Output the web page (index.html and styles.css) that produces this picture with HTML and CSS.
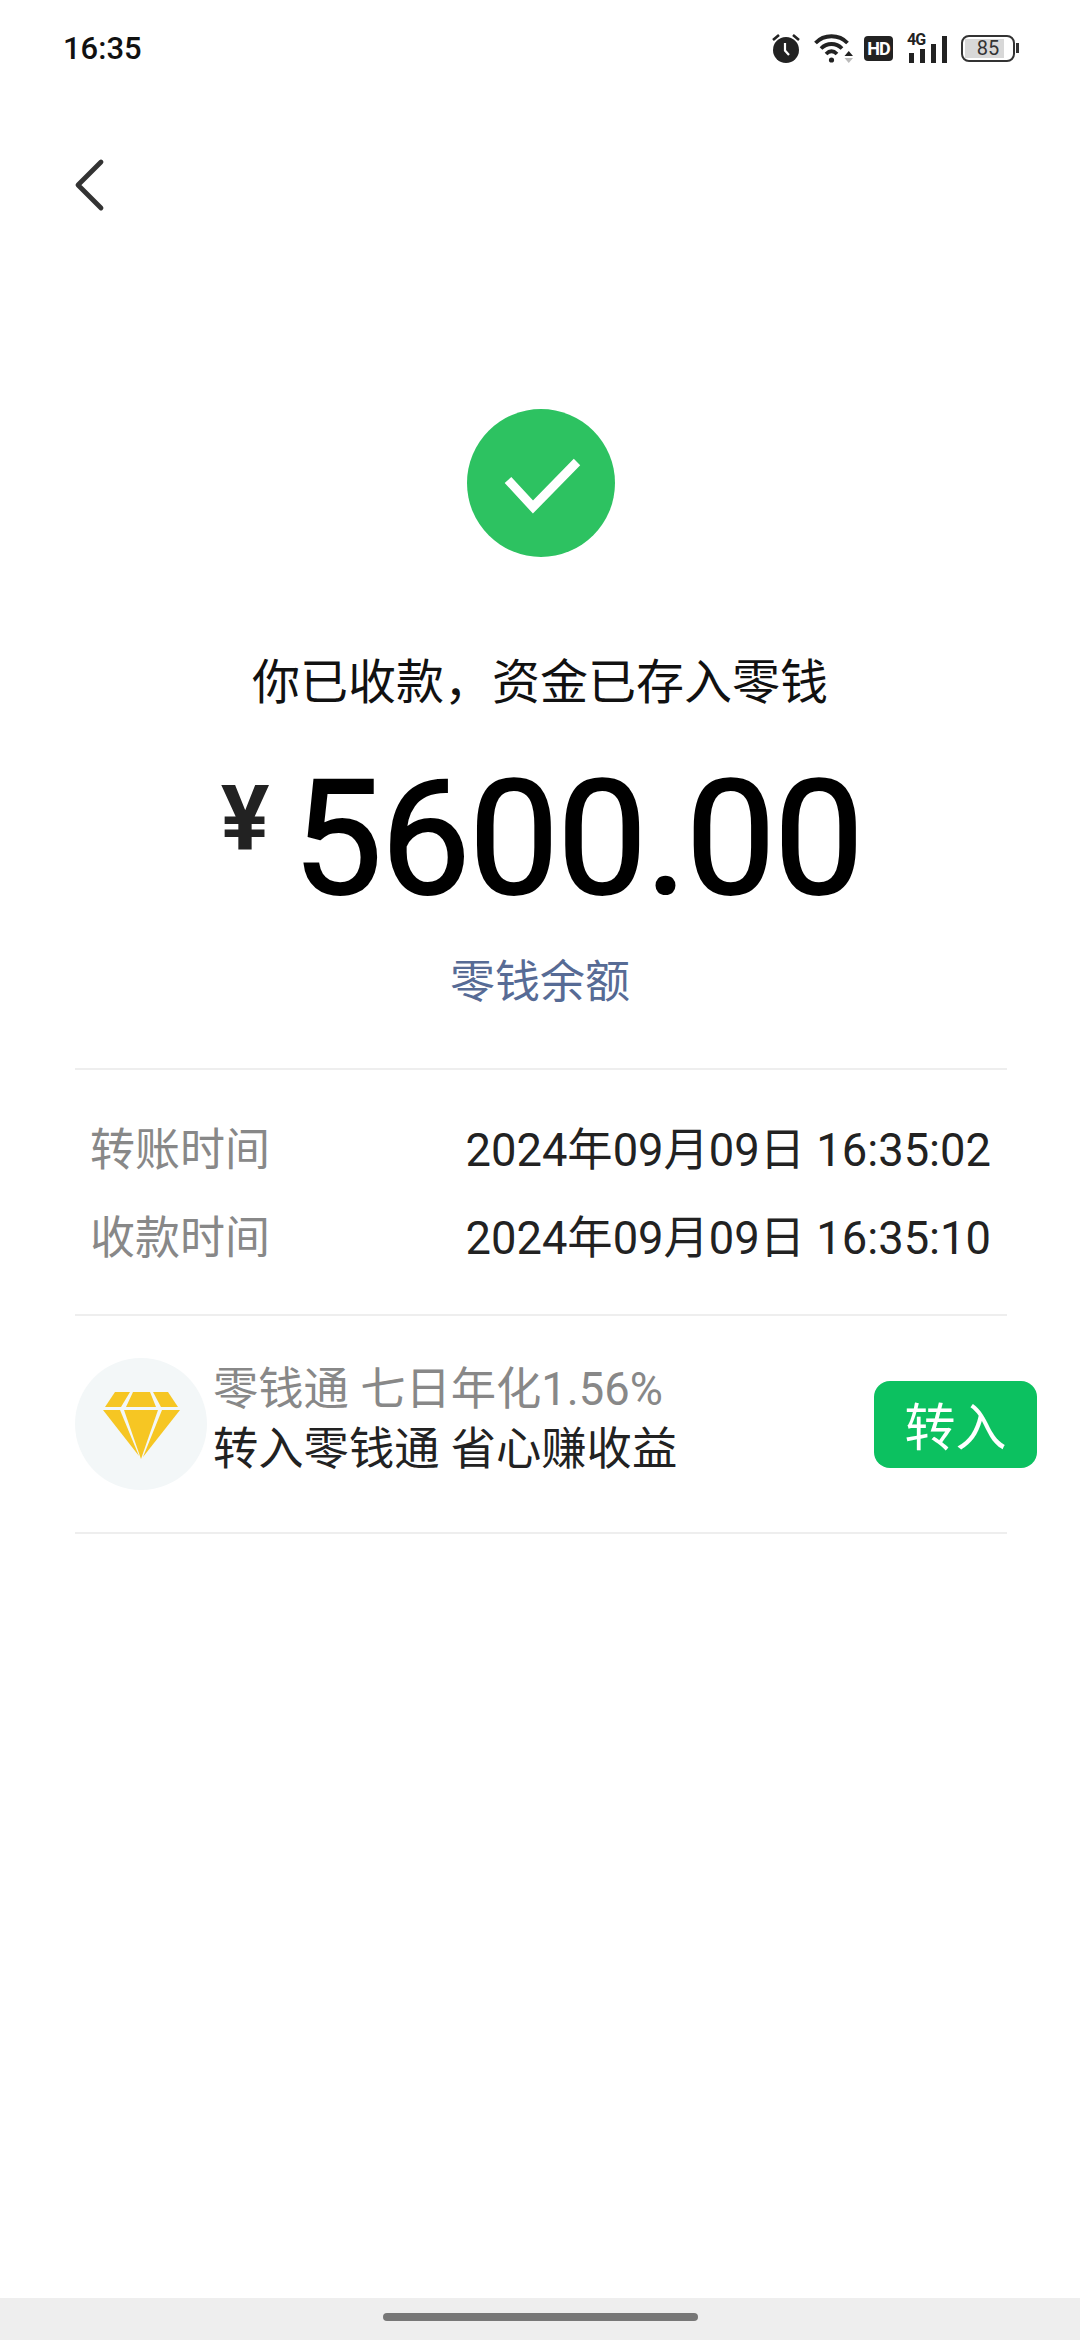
FILE: index.html
```html
<!DOCTYPE html>
<html lang="zh-CN">
<head>
    <meta charset="utf-8">
    <title>收款结果</title>
    <link rel="stylesheet" href="styles.css">
</head>

<body>
    <header class="status-bar">
        <span class="clock">16:35</span>
        <div class="status-icons">
            <svg class="icon-alarm" width="28" height="30" viewBox="0 0 28 30">
                <circle cx="14" cy="17" r="13" fill="#222"/>
                <path d="M13 10v7.500l4 4.500" fill="none" stroke="#fff" stroke-width="2.200"/>
                <path d="M1 7l6-5M27 7l-6-5" stroke="#222" stroke-width="2.600" fill="none"/>
            </svg>
            <svg class="icon-wifi" width="40" height="30" viewBox="0 0 40 30">
                <path d="M1.500 10C10 1 25 1 33.500 10" fill="none" stroke="#222" stroke-width="3.800"/>
                <path d="M7 15.500c6-6 15-6 21 0" fill="none" stroke="#222" stroke-width="3.800"/>
                <path d="M12 21c3.500-3.500 7.500-3.500 11 0" fill="none" stroke="#222" stroke-width="3.800"/>
                <circle cx="17.500" cy="27" r="2.600" fill="#222"/>
                <path d="M30.500 23h8.500l-4.250-5z" fill="#222"/>
                <path d="M30.500 25h8.500l-4.250 5z" fill="#bbb"/>
            </svg>
            <span class="badge-hd">HD</span>
            <div class="signal">
                <span class="signal-label">4G</span>
                <div class="signal-bars">
                    <i class="bar-1"></i><i class="bar-2"></i><i class="bar-3"></i><i class="bar-4"></i>
                </div>
            </div>
            <div class="battery">
                <div class="battery-body"><span class="battery-level">85</span></div>
                <div class="battery-cap"></div>
            </div>
        </div>
    </header>

    <nav class="nav">
        <svg width="36" height="54" viewBox="0 0 36 54">
            <path d="M31 4L8 27l23 23" fill="none" stroke="#333" stroke-width="4.800" stroke-linecap="round" stroke-linejoin="round"/>
        </svg>
    </nav>

    <main class="result">
        <svg class="check" width="148" height="148" viewBox="0 0 148 148">
            <circle cx="74" cy="74" r="74" fill="#2dc261"/>
            <path d="M41 71l25 27 44-45" fill="none" stroke="#fff" stroke-width="9"/>
        </svg>
        <p class="result-title">你已收款，资金已存入零钱</p>
        <div class="amount">
            <span class="currency">¥</span>
            <span class="value">5600.00</span>
        </div>
        <a class="balance-link">零钱余额</a>
    </main>

    <section class="details">
        <div class="detail-row">
            <span class="detail-label">转账时间</span>
            <span class="detail-value">2024年09月09日 16:35:02</span>
        </div>
        <div class="detail-row">
            <span class="detail-label">收款时间</span>
            <span class="detail-value">2024年09月09日 16:35:10</span>
        </div>
    </section>

    <section class="promo">
        <div class="promo-icon">
            <svg width="77" height="69" viewBox="0 0 77 69">
                <path d="M12 1h15l-9 15H2z" fill="#f6c623"/>
                <path d="M30 1h17l6 15H23z" fill="#f6c623"/>
                <path d="M50 1h15l10 15H58z" fill="#f6c623"/>
                <path d="M0 19h17l19 46z" fill="#f6c623"/>
                <path d="M21 19h34L38 68z" fill="#f6c623"/>
                <path d="M59 19h18L40 66z" fill="#f6c623"/>
            </svg>
        </div>
        <div class="promo-text">
            <div class="promo-rate">零钱通 七日年化1.56%</div>
            <div class="promo-desc">转入零钱通 省心赚收益</div>
        </div>
        <button class="promo-btn">转入</button>
    </section>

    <div class="spacer"></div>

    <footer class="gesture-bar">
        <div class="gesture-handle"></div>
    </footer>
</body>

</html>
```

FILE: styles.css
```css
html,
body {
    margin: 0;
    padding: 0;
    width: 1080px;
    height: 2340px;
    background-color: #fff;
    overflow: hidden;
}

body {
    display: flex;
    flex-direction: column;
    font-family: Roboto, "Noto Sans CJK SC", sans-serif;
    color: #111;
}

p {
    margin: 0;
}

.status-bar {
    display: flex;
    justify-content: space-between;
    align-items: center;
    height: 96px;
    padding: 0 61px 0 63px;
    box-sizing: border-box;
}

.clock {
    font-size: 31px;
    font-weight: 500;
    color: #111;
}

.status-icons {
    display: flex;
    align-items: center;
    gap: 14px;
}

.icon-wifi {
    margin-right: -4px;
}

.badge-hd {
    width: 29px;
    height: 25px;
    line-height: 25px;
    text-align: center;
    font-size: 18px;
    font-weight: 700;
    letter-spacing: -1px;
    color: #fff;
    background-color: #222;
    border-radius: 4px;
}

.signal {
    display: flex;
    align-items: flex-end;
    justify-content: flex-end;
    height: 29px;
    width: 40px;
    position: relative;
}

.signal-label {
    position: absolute;
    left: 0;
    top: -1px;
    font-size: 16px;
    font-weight: 700;
    line-height: 14px;
    letter-spacing: -1px;
    color: #222;
}

.signal-bars {
    display: flex;
    align-items: flex-end;
    gap: 6px;
}

.signal-bars i {
    display: block;
    width: 5px;
    background-color: #222;
}

.bar-1 { height: 10px; }
.bar-2 { height: 14px; }
.bar-3 { height: 19px; }
.bar-4 { height: 27px; }

.battery {
    display: flex;
    align-items: center;
}

.battery-body {
    width: 54px;
    height: 27px;
    padding: 2px;
    box-sizing: border-box;
    border: 2px solid #333;
    border-radius: 8px;
}

.battery-level {
    display: block;
    width: 39px;
    height: 19px;
    font-size: 20px;
    line-height: 19px;
    text-align: center;
    text-indent: 7px;
    color: #333;
    background-color: #d8d8d8;
}

.battery-cap {
    width: 3px;
    height: 10px;
    margin-left: 1px;
    background-color: #333;
}

.nav {
    height: 54px;
    padding: 62px 0 0 70px;
}

.nav svg {
    display: block;
}

.result {
    display: flex;
    flex-direction: column;
    align-items: center;
    padding-top: 197px;
}

.check {
    display: block;
    margin-left: 2px;
}

.result-title {
    margin-top: 92px;
    font-size: 48px;
    line-height: 68px;
    color: #111;
}

.amount {
    display: flex;
    align-items: flex-start;
    justify-content: center;
    margin-top: 42px;
    padding-left: 3px;
    height: 160px;
}

.currency {
    margin-top: 15px;
    margin-right: 23px;
    font-size: 91px;
    line-height: 91px;
    font-weight: 700;
    color: #222;
}

.value {
    font-size: 160px;
    line-height: 160px;
    font-weight: 400;
    letter-spacing: -1.7px;
    -webkit-text-stroke: 2px #000;
    color: #000;
}

.balance-link {
    margin-top: 34px;
    font-size: 45px;
    line-height: 60px;
    color: #576b95;
}

.details {
    display: flex;
    flex-direction: column;
    gap: 28px;
    margin: 55px 73px 0 75px;
    padding: 46px 16px 50px 15px;
    border-top: 2px solid #eee;
    border-bottom: 2px solid #eee;
}

.detail-row {
    display: flex;
    justify-content: space-between;
    align-items: center;
    height: 60px;
}

.detail-label {
    font-size: 45px;
    color: #888;
}

.detail-value {
    font-size: 45.3px;
    color: #222;
}

.promo {
    display: flex;
    align-items: center;
    margin: 0 73px 0 75px;
    height: 216px;
    border-bottom: 2px solid #eee;
}

.promo-icon {
    display: flex;
    align-items: center;
    justify-content: center;
    flex: none;
    width: 132px;
    height: 132px;
    border-radius: 50%;
    background-color: #f3f7f8;
}

.promo-icon svg {
    margin-top: 3px;
}

.promo-text {
    flex: 1;
    margin: 0 0 8px 6px;
}

.promo-rate {
    font-size: 45.3px;
    line-height: 60px;
    color: #888;
}

.promo-desc {
    font-size: 45.3px;
    line-height: 60px;
    color: #222;
}

.promo-btn {
    flex: none;
    width: 163px;
    height: 87px;
    margin-right: -30px;
    padding: 0;
    border: 0;
    border-radius: 16px;
    font-family: inherit;
    font-size: 51px;
    color: #fff;
    background-color: #0cc160;
}

.spacer {
    flex: 1;
}

.gesture-bar {
    display: flex;
    justify-content: center;
    height: 42px;
    padding-top: 15px;
    box-sizing: border-box;
    background-color: #eee;
}

.gesture-handle {
    width: 315px;
    height: 8px;
    border-radius: 4px;
    background-color: #777;
}
```
